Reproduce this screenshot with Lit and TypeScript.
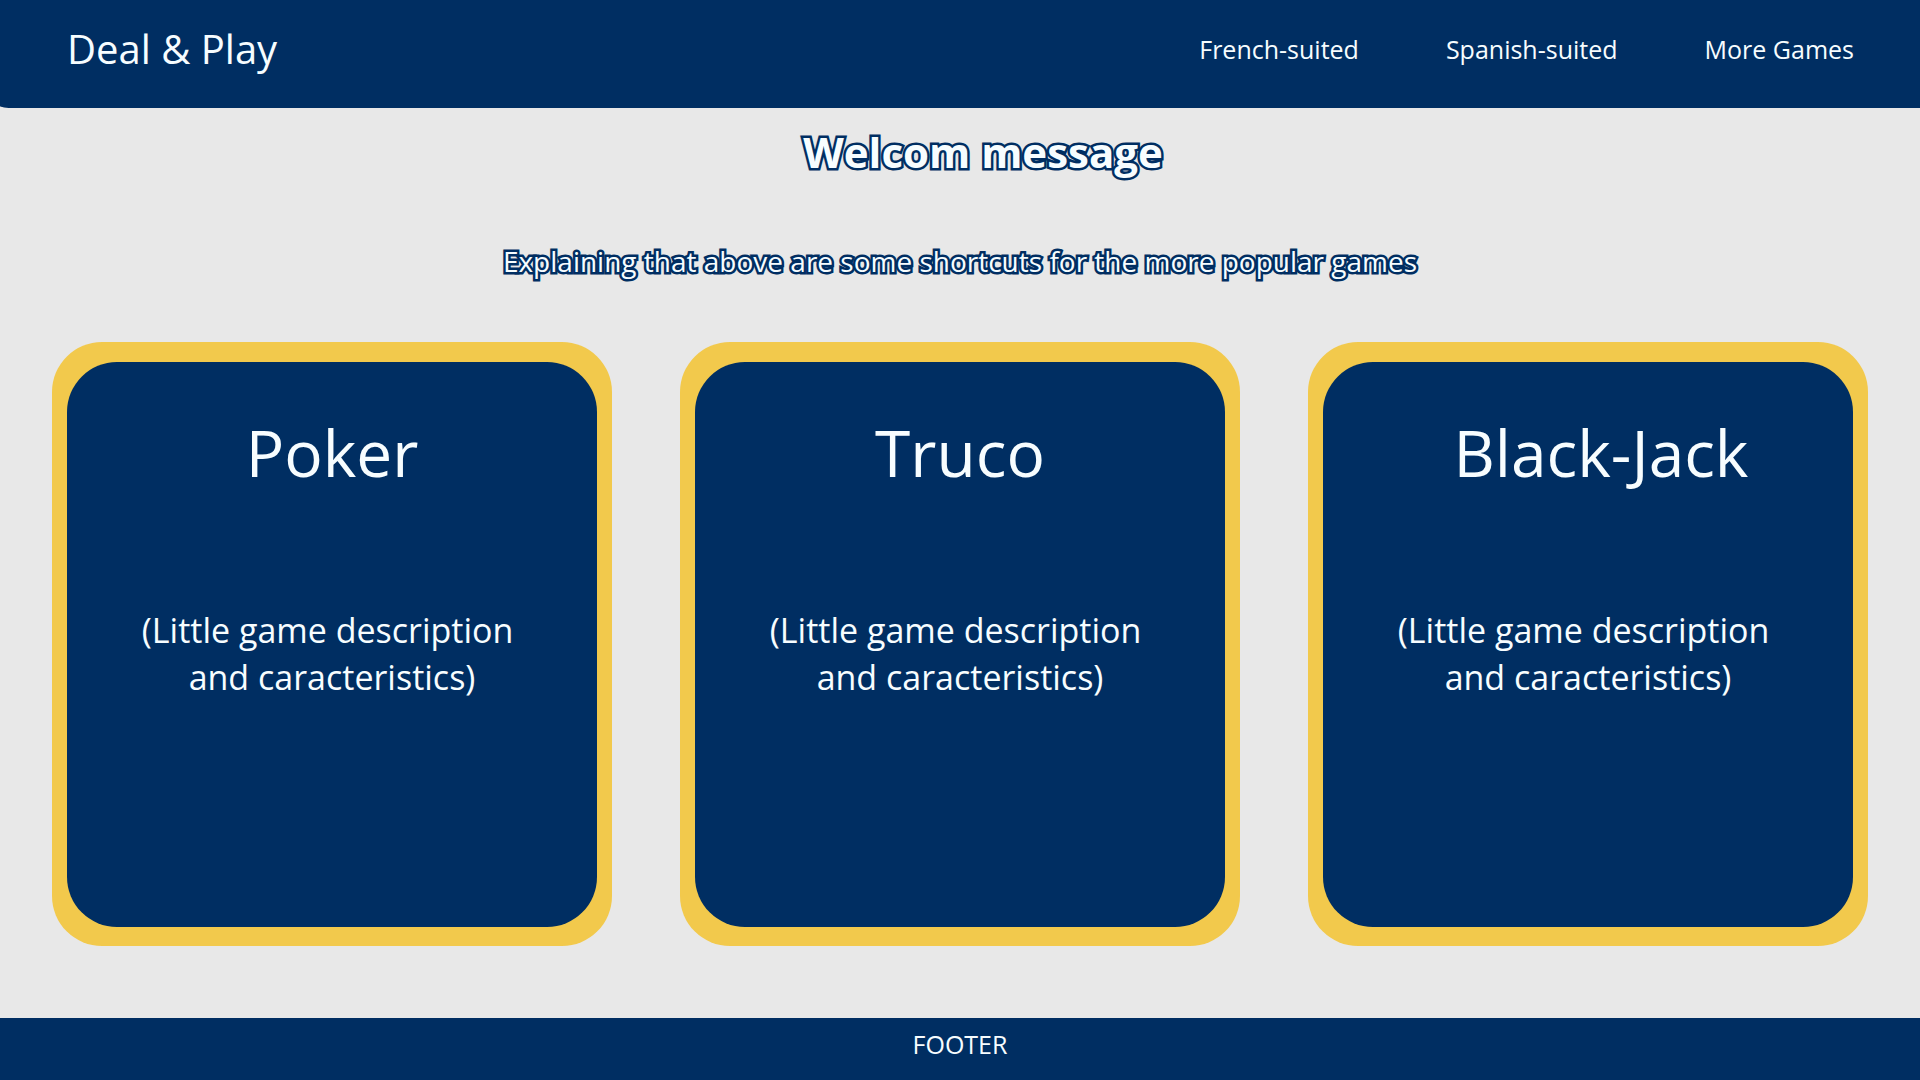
import { LitElement, html, css } from "lit";
import { customElement, property } from "lit/decorators.js";

interface Game {
  name: string;
  href: string;
  wide?: boolean;
}

const NAV_LINKS = [
  { label: "French-suited", href: "#french-suited" },
  { label: "Spanish-suited", href: "#spanish-suited" },
  { label: "More Games", href: "#more-games" },
];

const GAMES: Game[] = [
  { name: "Poker", href: "#poker" },
  { name: "Truco", href: "#truco" },
  { name: "Black-Jack", href: "#black-jack", wide: true },
];

@customElement("game-card")
export class GameCard extends LitElement {
  @property() name = "";
  @property() href = "";
  @property({ type: Boolean }) wide = false;

  static styles = css`
    :host {
      display: flex;
      box-sizing: border-box;
      padding: 20px 15px 19px;
      background: #f2c94c;
      border-radius: 50px;
    }
    .face {
      flex: 1;
      box-sizing: border-box;
      padding: 47px 60px;
      border-radius: 50px;
      background: #002e62;
      color: #f7fdff;
      text-align: center;
      text-decoration: none;
    }
    .title {
      margin: 0 0 110px;
      font-size: 64px;
      line-height: 88px;
      font-weight: 400;
    }
    .wide {
      padding-left: 26px;
    }
    .description {
      margin: 0;
      font-size: 34px;
      line-height: 47px;
    }
  `;

  render() {
    return html`
      <a class="face" href=${this.href}>
        <h2 class="title ${this.wide ? "wide" : ""}">${this.name}</h2>
        <p class="description">(Little game description&nbsp;<br />and caracteristics)</p>
      </a>
    `;
  }
}

@customElement("app-root")
export class AppRoot extends LitElement {
  static styles = css`
    :host {
      display: flex;
      flex-direction: column;
      min-height: 100vh;
      background: #e8e8e8;
      color: #f7fdff;
      font-family: "Open Sans", "Noto Sans", sans-serif;
    }
    .header {
      display: flex;
      align-items: center;
      justify-content: space-between;
      padding: 22px 66px 32px 67px;
      background: #002e62;
      border-bottom-left-radius: 14px 2px;
    }
    .brand,
    .link {
      color: inherit;
      text-decoration: none;
    }
    .brand {
      font-size: 40px;
      line-height: 54px;
    }
    .nav {
      display: flex;
      gap: 87px;
      font-size: 25px;
      line-height: 36px;
    }
    .main {
      flex: 1;
      display: flex;
      flex-direction: column;
      padding: 14px 52px 72px;
    }
    .welcome,
    .intro {
      margin: 0;
      text-align: center;
      paint-order: stroke fill;
      -webkit-text-stroke: 5px #002e62;
    }
    .welcome {
      padding-left: 46px;
      font-size: 42px;
      line-height: 60px;
      font-weight: 700;
    }
    .intro {
      margin: 59px 0 61px;
      font-size: 28px;
      line-height: 40px;
    }
    .cards {
      flex: 1;
      display: grid;
      grid-template-columns: repeat(3, 1fr);
      gap: 68px;
    }
    .footer {
      padding: 8px 0 18px;
      background: #002e62;
      text-align: center;
      font-size: 25px;
      line-height: 36px;
    }
  `;

  render() {
    return html`
      <header class="header">
        <a class="brand" href="#home">Deal &amp; Play</a>
        <nav class="nav">
          ${NAV_LINKS.map((l) => html`<a class="link" href=${l.href}>${l.label}</a>`)}
        </nav>
      </header>
      <main class="main">
        <h1 class="welcome">Welcom message</h1>
        <p class="intro">Explaining that above are some shortcuts for the more popular games</p>
        <section class="cards">
          ${GAMES.map(
            (g) => html`<game-card .name=${g.name} .href=${g.href} .wide=${!!g.wide}></game-card>`
          )}
        </section>
      </main>
      <footer class="footer">FOOTER</footer>
    `;
  }
}
